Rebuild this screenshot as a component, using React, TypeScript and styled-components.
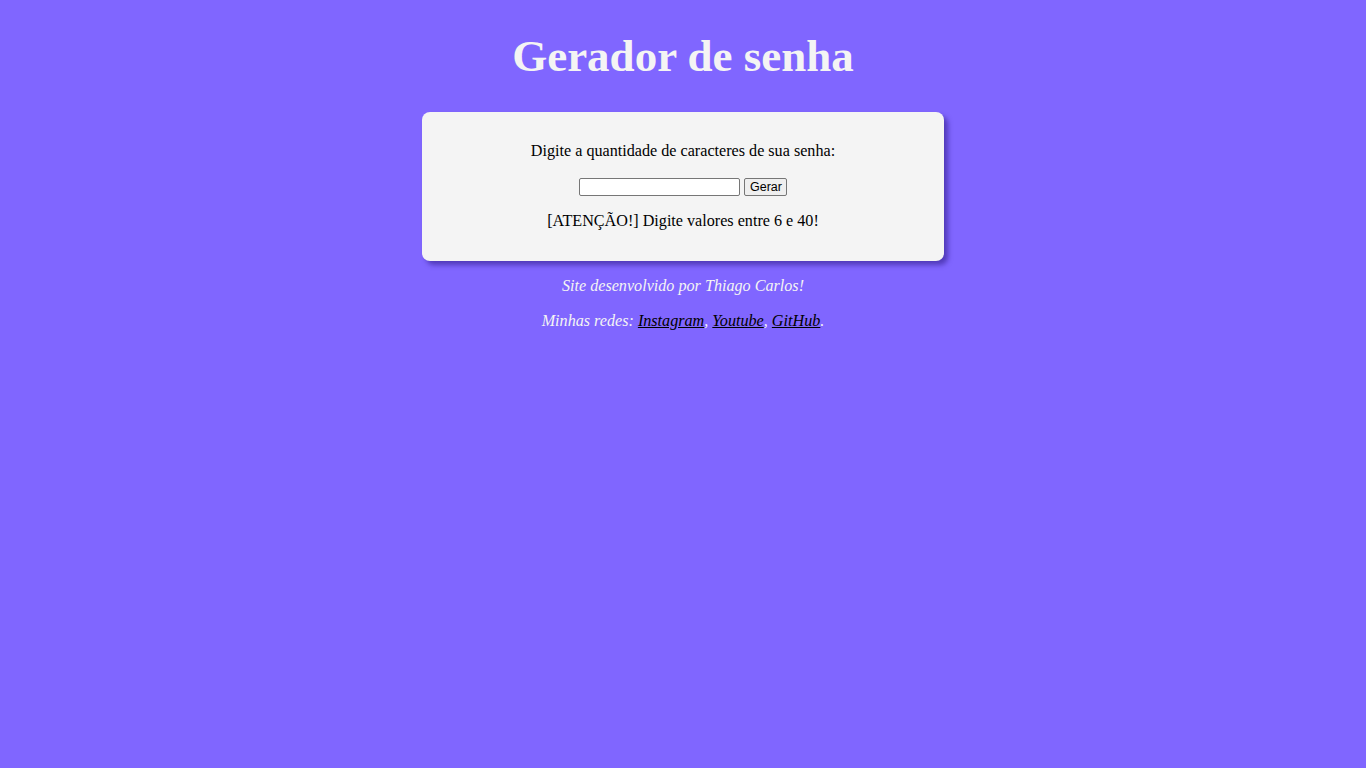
import React from "react";
import styled, { createGlobalStyle } from "styled-components";

const Global = createGlobalStyle`
  html, body { margin: 0; padding: 0; background: #8066ff; }
  body { font-family: "Liberation Serif", "Times New Roman", serif; font-size: 16px; }
`;

const Page = styled.div`
  min-height: 768px;
  background: #8066ff;
  padding-top: 33px;
  display: flex;
  flex-direction: column;
  align-items: center;
`;

const Title = styled.h1`
  margin: 0;
  font-size: 45px;
  line-height: 46px;
  font-weight: bold;
  color: #f4f4f4;
  text-align: center;
`;

const Card = styled.section`
  margin-top: 33px;
  width: 522px;
  box-sizing: border-box;
  background: #f4f4f4;
  border-radius: 8px;
  box-shadow: 4px 4px 5px rgba(50, 30, 140, 0.6);
  padding: 30px 20px 31px;
  display: flex;
  flex-direction: column;
  align-items: center;
  color: #000;
`;

const Text = styled.p`
  margin: 0;
  font-size: 16.15px;
  line-height: 18px;
  text-align: center;
`;

const Row = styled.form`
  margin: 18px 0 16px;
  display: flex;
  gap: 4px;
  align-items: center;
`;

const Input = styled.input`
  width: 161px;
  height: 18px;
  box-sizing: border-box;
  border: 1px solid #767676;
  border-radius: 2px;
  padding: 1px 2px;
  font-family: "Liberation Sans", Arial, sans-serif;
  font-size: 13.33px;
  background: #fff;
`;

const Button = styled.button`
  height: 18px;
  box-sizing: border-box;
  width: 43px;
  border: 1px solid #767676;
  border-radius: 2px;
  background: #efefef;
  padding: 0 5px;
  font-family: "Liberation Sans", Arial, sans-serif;
  font-size: 12.5px;
  line-height: 14px;
  color: #000;
`;

const Footer = styled.footer`
  margin-top: 16px;
  display: flex;
  flex-direction: column;
  align-items: center;
  gap: 17px;
  color: #f4f4f4;
  font-style: italic;
`;

const Link = styled.a`
  color: #000;
  text-decoration: underline;
`;

export default function App() {
  return (
    <>
      <Global />
      <Page>
        <Title>Gerador de senha</Title>
        <Card>
          <Text>Digite a quantidade de caracteres de sua senha:</Text>
          <Row onSubmit={(e) => e.preventDefault()}>
            <Input type="text" />
            <Button type="submit">Gerar</Button>
          </Row>
          <Text>[ATENÇÃO!] Digite valores entre 6 e 40!</Text>
        </Card>
        <Footer>
          <Text>Site desenvolvido por Thiago Carlos!</Text>
          <Text>
            Minhas redes: <Link href="#">Instagram</Link>, <Link href="#">Youtube</Link>,{" "}
            <Link href="#">GitHub</Link>.
          </Text>
        </Footer>
      </Page>
    </>
  );
}
